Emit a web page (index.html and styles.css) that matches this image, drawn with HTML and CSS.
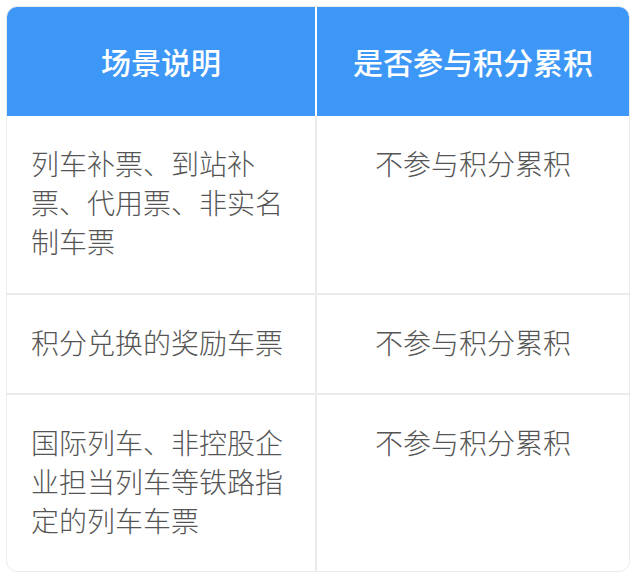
FILE: index.html
```html
<!DOCTYPE html>
<html lang="zh-CN">
<head>
<meta charset="utf-8">
<title>积分累积说明</title>
<link rel="stylesheet" href="styles.css">
</head>
<body>
<div class="table">
  <div class="row head">
    <div class="cell">场景说明</div>
    <div class="cell">是否参与积分累积</div>
  </div>
  <div class="row">
    <div class="cell">列车补票、到站补票、代用票、非实名制车票</div>
    <div class="cell center">不参与积分累积</div>
  </div>
  <div class="row">
    <div class="cell">积分兑换的奖励车票</div>
    <div class="cell center">不参与积分累积</div>
  </div>
  <div class="row">
    <div class="cell">国际列车、非控股企业担当列车等铁路指定的列车车票</div>
    <div class="cell center">不参与积分累积</div>
  </div>
</div>
</body>
</html>
```

FILE: styles.css
```css
html, body {
  margin: 0;
  padding: 0;
  background: #ffffff;
}
body {
  font-family: "Noto Sans CJK SC", "Noto Sans", sans-serif;
  width: 640px;
  height: 576px;
  overflow: hidden;
}
.table {
  margin: 6px 0 0 6px;
  width: 622px;
  border: 1px solid #ebebeb;
  border-radius: 11px;
  overflow: hidden;
  background: #ffffff;
}
.row {
  display: grid;
  grid-template-columns: 310px 1fr;
  border-top: 2px solid #ebebeb;
}
.row .cell {
  padding: 28px 24px 31px;
  font-size: 28px;
  line-height: 39px;
  font-weight: 300;
  color: #555555;
}
.row .cell:first-child {
  border-right: 2px solid #ebebeb;
}
.row .cell.center {
  text-align: center;
}
.row:nth-child(2) .cell {
  padding-bottom: 32px;
}
.row.head {
  border-top: none;
  background: #3d97f7;
  height: 109px;
}
.row.head .cell {
  padding: 0;
  display: flex;
  align-items: center;
  justify-content: center;
  color: #ffffff;
  font-size: 30px;
  font-weight: 500;
}
.row.head .cell:first-child {
  border-right: 2px solid #ffffff;
}
.row:nth-child(2) {
  border-top: none;
}
```
